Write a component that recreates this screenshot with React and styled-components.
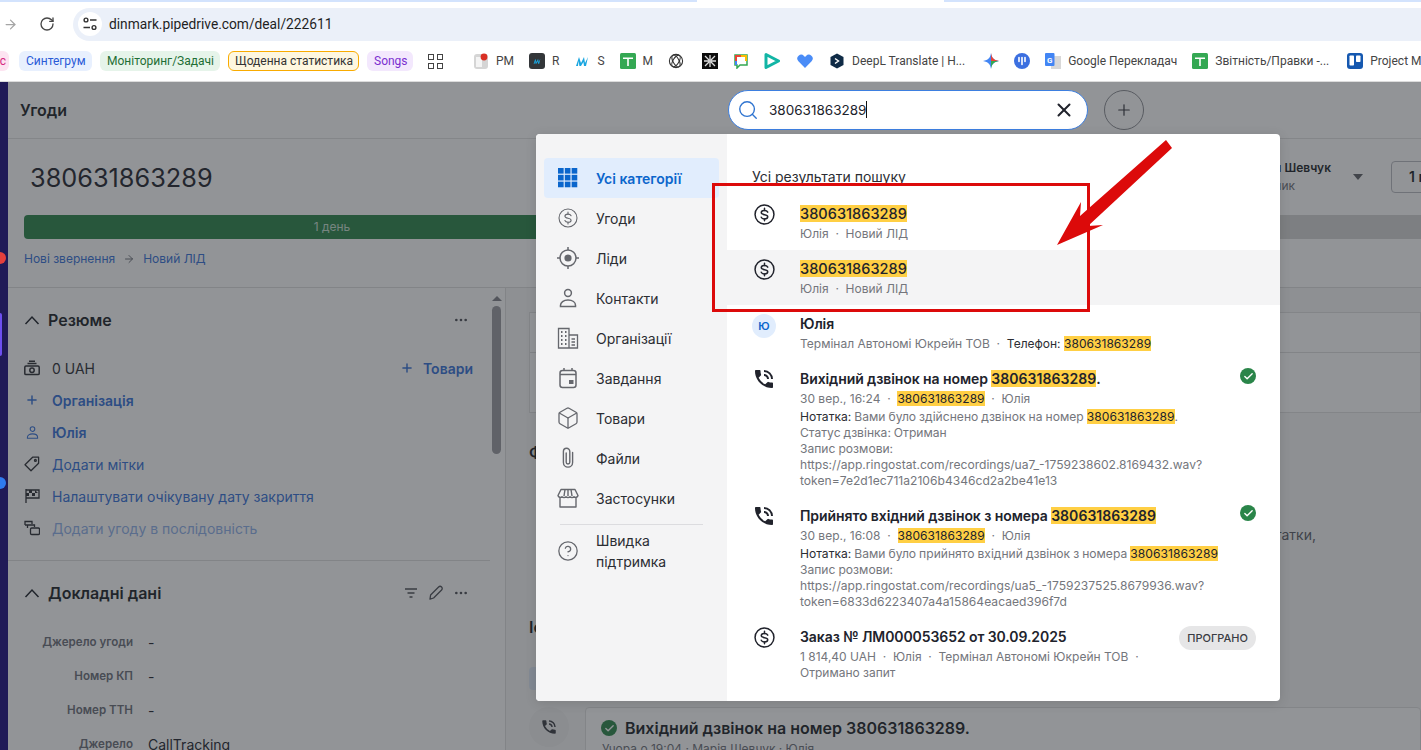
import styled, { createGlobalStyle } from "styled-components";
import {
  ArrowRight,
  RotateCw,
  Search,
  X,
  Plus,
  Ellipsis,
  CircleHelp,
  Box,
  Check,
} from "lucide-react";
import { MdPhoneInTalk } from "react-icons/md";

const GlobalStyle = createGlobalStyle`
  html, body {
    margin: 0;
    height: 100%;
    overflow: hidden;
    background: #fff;
    font-family: "Inter", "Noto Sans", sans-serif;
    color: #1b1f27;
  }
  * { box-sizing: border-box; }
`;

const PHONE = "380631863289";

const Page = styled.div`
  width: 1421px;
  height: 750px;
  overflow: hidden;
  display: flex;
  flex-direction: column;
`;

/* browser chrome */
const Chrome = styled.div`
  height: 82px;
  flex: none;
  background: #fff;
  border-bottom: 1px solid #dcdcdc;
  font-family: "Roboto", "Noto Sans", sans-serif;
`;

const TabStrip = styled.div`
  height: 7px;
  display: flex;
  justify-content: space-between;
  align-items: flex-start;
`;

const TabLine = styled.div`
  height: 2px;
  width: ${(p) => p.$w}px;
  background: #d3e3fd;
`;

const Toolbar = styled.div`
  height: 34px;
  display: flex;
  align-items: center;
  padding-left: 3px;
  color: #474747;
`;

const ReloadWrap = styled.div`
  display: flex;
  margin: 0 18px 0 21px;
`;

const AddressBar = styled.div`
  flex: 1;
  height: 33px;
  border-radius: 17px 0 0 17px;
  background: #ebf0f9;
  display: flex;
  align-items: center;
  padding-left: 5px;
  gap: 7px;
  font-size: 13.75px;
  color: #1f1f1f;
`;

const TuneCircle = styled.div`
  width: 24px;
  height: 24px;
  border-radius: 50%;
  background: #fff;
  display: flex;
  align-items: center;
  justify-content: center;
`;

const Bookmarks = styled.div`
  height: 40px;
  display: flex;
  align-items: center;
  gap: 8px;
  white-space: nowrap;
  font-size: 12px;
  color: #444;
`;

const Chip = styled.div`
  flex: none;
  height: 20px;
  line-height: 18px;
  padding: 0 6px;
  border-radius: 6px;
  text-align: center;
  width: ${(p) => p.$w}px;
  margin-left: ${(p) => p.$ml || 0}px;
  background: ${(p) => p.$bg};
  color: ${(p) => p.$fg};
  border: 1px solid ${(p) => p.$line || "transparent"};
`;

const Apps = styled.div`
  margin-left: 7px;
  width: 15px;
  height: 15px;
  display: grid;
  grid-template-columns: 6px 6px;
  gap: 3px;
`;

const AppsCell = styled.span`
  border: 1.5px solid #444;
`;

const BarSep = styled.div`
  width: 2px;
  height: 20px;
  background: #d3e3fd;
  margin: 0 1px 0 7px;
`;

const Link = styled.div`
  flex: none;
  display: flex;
  align-items: center;
  gap: 7px;
  margin-left: 6px;
  margin-right: ${(p) => p.$mr || 1}px;
`;

/* pipedrive app, dimmed by the scrim */
const AppArea = styled.div`
  position: relative;
  flex: 1;
  display: flex;
  overflow: hidden;
  background: #fff;
`;

const Scrim = styled.div`
  position: absolute;
  inset: 0;
  z-index: 1;
  background: rgba(38, 41, 47, 0.5);
`;

const Rail = styled.div`
  position: relative;
  z-index: 2;
  width: 8px;
  flex: none;
  background: #201a57;
`;

const RailDot = styled.span`
  position: absolute;
  left: -6px;
  top: ${(p) => p.$top}px;
  width: 12px;
  height: 12px;
  border-radius: 50%;
  background: ${(p) => p.$c};
`;

const RailMark = styled.span`
  position: absolute;
  left: 0;
  top: 231px;
  width: 2px;
  height: 43px;
  background: #6d4ff0;
  border-radius: 0 2px 2px 0;
`;

const Main = styled.div`
  flex: 1;
  min-width: 0;
  display: flex;
  flex-direction: column;
`;

const Header = styled.div`
  height: 57px;
  flex: none;
  display: flex;
  align-items: center;
  border-bottom: 1px solid #e3e3e3;
`;

const HeaderTitle = styled.div`
  width: 720px;
  padding-left: 12px;
  font-size: 16px;
  font-weight: 600;
`;

const SearchBox = styled.div`
  position: relative;
  z-index: 2;
  width: 360px;
  height: 40px;
  margin-top: -1px;
  border: 1px solid #3d7fe0;
  border-radius: 20px;
  background: #fff;
  display: flex;
  align-items: center;
  padding: 0 12px 0 8px;
  color: #21232c;
`;

const SearchText = styled.div`
  flex: 1;
  margin-left: 10px;
  font-size: 13.5px;
`;

const Caret = styled.span`
  display: inline-block;
  width: 1px;
  height: 17px;
  vertical-align: -3px;
  background: #111;
`;

const AddButton = styled.div`
  width: 40px;
  height: 40px;
  margin-left: 16px;
  border-radius: 50%;
  border: 1px solid #8a8c92;
  display: flex;
  align-items: center;
  justify-content: center;
  color: #33353c;
`;

const DealHead = styled.div`
  height: 149px;
  flex: none;
  padding-left: 16px;
  border-bottom: 1px solid #dedede;
`;

const DealTop = styled.div`
  width: 1500px;
  height: 76px;
  display: flex;
  align-items: center;
`;

const DealTitle = styled.h1`
  flex: 1;
  margin: 0;
  padding-left: 6px;
  font-size: 25.3px;
  font-weight: 400;
  color: #21232c;
`;

const Owner = styled.div`
  width: 90px;
  margin-right: 17px;
`;

const OwnerName = styled.div`
  font-size: 12px;
  font-weight: 600;
  line-height: 18px;
  white-space: nowrap;
`;

const OwnerRole = styled.div`
  font-size: 12px;
  line-height: 18px;
  color: #6d7079;
`;

const CaretDown = styled.span`
  width: 0;
  height: 0;
  border-left: 5px solid transparent;
  border-right: 5px solid transparent;
  border-top: 6px solid #5e6066;
  margin-right: 28px;
`;

const GhostButton = styled.div`
  width: 133px;
  height: 32px;
  padding-left: 17px;
  line-height: 30px;
  border: 1px solid #b9bac0;
  border-radius: 4px;
  font-size: 14px;
  font-weight: 600;
  white-space: nowrap;
`;

const Pipeline = styled.div`
  display: flex;
  gap: 1px;
  height: 24px;
`;

const Stage = styled.div`
  flex: ${(p) => (p.$w ? `0 0 ${p.$w}px` : 1)};
  border-radius: ${(p) => (p.$w ? "4px 0 0 4px" : "0")};
  background: ${(p) => (p.$w ? "#2a8549" : "#d4d4d5")};
  color: rgba(255, 255, 255, 0.75);
  text-align: center;
  font-size: 12px;
  line-height: 24px;
`;

const Breadcrumb = styled.div`
  display: flex;
  align-items: center;
  gap: 8px;
  margin-top: 12px;
  font-size: 12px;
  line-height: 16px;
  color: #3571d8;
`;

const Content = styled.div`
  flex: 1;
  min-height: 0;
  display: flex;
`;

const Aside = styled.div`
  position: relative;
  width: 498px;
  flex: none;
  border-right: 1px solid #dedede;
  overflow: hidden;
`;

const ScrollUp = styled.span`
  position: absolute;
  left: 484px;
  top: 8px;
  width: 0;
  height: 0;
  border-left: 5px solid transparent;
  border-right: 5px solid transparent;
  border-bottom: 5px solid #808188;
`;

const ScrollThumb = styled.span`
  position: absolute;
  left: 484px;
  top: 18px;
  width: 9px;
  height: 148px;
  border-radius: 5px;
  background: #9a9ba1;
`;

const Section = styled.div`
  width: 482px;
  padding: 20px 17px 16px 16px;
  border-bottom: ${(p) => (p.$last ? "none" : "1px solid #dedede")};
`;

const SectionHead = styled.div`
  display: flex;
  align-items: center;
  height: 24px;
  gap: 8px;
  margin-bottom: 20px;
`;

const SectionTitle = styled.div`
  flex: 1;
  font-size: 16px;
  font-weight: 600;
`;

const SectionTools = styled.div`
  display: flex;
  gap: 9px;
  padding-right: 4px;
  color: #4d4f56;
`;

const SummaryRow = styled.div`
  height: 32px;
  display: flex;
  align-items: center;
  gap: 12px;
  font-size: 14px;
  font-weight: ${(p) => (p.$strong ? 600 : 400)};
  color: ${(p) => p.$c || "#3571d8"};
`;

const SummaryIcon = styled.span`
  width: 16px;
  display: flex;
  justify-content: center;
  color: ${(p) => (p.$link ? "#3571d8" : "#2b2d33")};
`;

const PlusLink = styled.span`
  margin-left: auto;
  display: flex;
  align-items: center;
  gap: 9px;
  font-weight: 600;
  color: #3571d8;
`;

const FieldRow = styled.div`
  height: 34px;
  display: flex;
  align-items: center;
  gap: 15px;
`;

const FieldLabel = styled.div`
  width: 109px;
  text-align: right;
  font-size: 11.6px;
  font-weight: 600;
  color: #6b6e78;
`;

const FieldValue = styled.div`
  font-size: 14px;
  color: #21232c;
`;

const Feed = styled.div`
  flex: 1;
  min-width: 0;
  padding: 24px 0 0 23px;
  background: #f7f7f7;
`;

const FeedCard = styled.div`
  height: 101px;
  background: #fff;
  border: 1px solid #e0e0e0;
  padding-top: 39px;
`;

const FeedCardLine = styled.div`
  height: 1px;
  background: #dedede;
`;

const FeedHeading = styled.div`
  margin-top: ${(p) => p.$mt}px;
  font-size: 16px;
  line-height: 24px;
  font-weight: 600;
`;

const FeedNote = styled.div`
  margin-top: 61px;
  padding-right: 105px;
  text-align: right;
  font-size: 14px;
  line-height: 20px;
  color: #5a5d66;
`;

const FeedPill = styled.div`
  width: 60px;
  height: 23px;
  margin-top: 28px;
  border-radius: 4px;
  background: #dfe9f7;
`;

const Timeline = styled.div`
  display: flex;
  gap: 16px;
  margin-top: 17px;
`;

const TimelineBadge = styled.div`
  width: 40px;
  height: 40px;
  flex: none;
  border-radius: 50%;
  background: #f0f0f0;
  display: flex;
  align-items: center;
  justify-content: center;
  color: #3a3c43;
`;

const TimelineCard = styled.div`
  flex: 1;
  height: 80px;
  padding: 9px 15px;
  background: #fff;
  border: 1px solid #e0e0e0;
  border-radius: 4px;
`;

const TimelineTitle = styled.div`
  display: flex;
  align-items: center;
  gap: 8px;
  font-size: 16px;
  line-height: 22px;
  font-weight: 600;
`;

const TimelineSub = styled.div`
  margin-top: 2px;
  padding-left: 1px;
  font-size: 12px;
  color: #6d7079;
`;

/* search dropdown */
const Dropdown = styled.div`
  position: absolute;
  z-index: 3;
  left: 536px;
  top: 52px;
  width: 744px;
  height: 567px;
  display: flex;
  background: #fff;
  border-radius: 4px;
  overflow: hidden;
  box-shadow: 0 2px 12px rgba(0, 0, 0, 0.12);
`;

const Categories = styled.div`
  width: 191px;
  flex: none;
  padding: 24px 8px;
  background: #f4f4f5;
`;

const Category = styled.div`
  min-height: 40px;
  display: flex;
  align-items: center;
  gap: 16px;
  padding-left: 12px;
  border-radius: 4px;
  font-size: 14px;
  font-weight: ${(p) => (p.$active ? 600 : 400)};
  color: ${(p) => (p.$active ? "#0b66cc" : "#2b2d33")};
  background: ${(p) => (p.$active ? "#e1edfd" : "transparent")};
`;

const CategoryIcon = styled.span`
  width: 24px;
  height: 24px;
  flex: none;
  display: flex;
  align-items: center;
  justify-content: center;
  color: ${(p) => (p.$active ? "#0b66cc" : "#65676d")};
`;

const HelpLabel = styled.div`
  line-height: 21px;
`;

const CategoryRule = styled.div`
  height: 1px;
  margin: 6px 16px 5px 16px;
  background: #dcdcdf;
`;

const Results = styled.div`
  flex: 1;
  min-width: 0;
  padding-top: 35px;
`;

const ResultsTitle = styled.div`
  padding-left: 25px;
  margin-bottom: 10px;
  font-size: 14px;
  line-height: 16px;
  color: #2b2d33;
`;

const Result = styled.div`
  display: flex;
  gap: 24px;
  padding: 10px 24px 8px 25px;
  background: ${(p) => (p.$hover ? "#f4f4f5" : "transparent")};
`;

const ResultIcon = styled.span`
  width: 24px;
  height: 20px;
  margin-top: -1px;
  flex: none;
  display: flex;
  align-items: center;
  justify-content: center;
  color: #21232c;
`;

const Avatar = styled.span`
  width: 24px;
  height: 24px;
  margin-top: 4px;
  border-radius: 50%;
  background: #e1edfd;
  color: #0b66cc;
  font-size: 11px;
  font-weight: 600;
  display: flex;
  align-items: center;
  justify-content: center;
`;

const ResultBody = styled.div`
  flex: 1;
  min-width: 0;
`;

const ResultTitle = styled.div`
  font-size: ${(p) => p.$size || 14}px;
  line-height: 20px;
  font-weight: ${(p) => p.$weight || 600};
  margin: -1px 0 2px;
  letter-spacing: -0.08px;
  color: #21232c;
`;

const Meta = styled.div`
  font-size: 12px;
  line-height: 16px;
  color: #74767c;
`;

const Strong = styled.span`
  color: #2b2d33;
`;

const Mark = styled.mark`
  background: #ffcf44;
  color: #21232c;
  letter-spacing: 0.05px;
`;

const NoteBlock = styled.div`
  margin-top: 2px;
  font-size: 12.1px;
  line-height: 16px;
  word-spacing: -0.4px;
  color: #74767c;
`;

const StatusDot = styled.span`
  width: 16px;
  height: 16px;
  flex: none;
  margin: ${(p) => p.$mt || 0}px 0 0 -24px;
  border-radius: 50%;
  background: #2a8549;
  color: #fff;
  display: flex;
  align-items: center;
  justify-content: center;
`;

const TitleDot = styled(StatusDot)`
  margin: 0;
`;

const Badge = styled.span`
  flex: none;
  height: 24px;
  padding: 0 8px;
  margin-top: -2px;
  border-radius: 12px;
  background: #e6e6e7;
  font-size: 11px;
  font-weight: 500;
  line-height: 24px;
  color: #3a3c43;
`;

/* annotation drawn over the screenshot */
const RedFrame = styled.div`
  position: absolute;
  z-index: 4;
  left: 712px;
  top: 101px;
  width: 378px;
  height: 129px;
  border: 3px solid #dc0a0a;
  pointer-events: none;
`;

const RedArrow = styled.svg`
  position: absolute;
  z-index: 4;
  left: 1050px;
  top: 55px;
  pointer-events: none;
`;

const DollarIcon = ({ size = 21, width = 1.7 }) => (
  <svg width={size} height={size} viewBox="0 0 24 24" fill="none" stroke="currentColor" strokeWidth={width} strokeLinecap="round">
    <circle cx="12" cy="12" r="10.8" />
    <path d="M15.7 9.3c-.6-1.3-2-2-3.7-2-2.1 0-3.7 1-3.7 2.5 0 3.4 7.4 1.5 7.4 4.8 0 1.500-1.600 2.500-3.700 2.500-1.700 0-3.100-.7-3.700-2" />
    <path d="M12 4.8v2.5M12 17.100v2.100" />
  </svg>
);

const ChevronIcon = () => (
  <svg width="16" height="14" viewBox="0 0 16 14" fill="none" stroke="currentColor" strokeWidth="1.5">
    <path d="M1.5 11 8 4l6.5 7" />
  </svg>
);

const GridIcon = () => (
  <svg width="20" height="20" viewBox="0 0 22 22" fill="currentColor">
    {[0, 7.5, 15].map((y) =>
      [0, 7.5, 15].map((x) => <rect key={`${x}-${y}`} x={x} y={y} width="6.2" height="6.2" />)
    )}
  </svg>
);

const LeadIcon = () => (
  <svg width="24" height="24" viewBox="0 0 24 24" fill="none" stroke="currentColor" strokeWidth="1.5">
    <circle cx="12" cy="12" r="8" />
    <circle cx="12" cy="12" r="3.6" fill="currentColor" stroke="none" />
    <path d="M12 1v3M12 20v3M1 12h3M20 12h3" />
  </svg>
);

const PersonIcon = ({ size = 22 }) => (
  <svg width={size} height={size} viewBox="0 0 22 22" fill="none" stroke="currentColor" strokeWidth="1.5">
    <circle cx="11" cy="6" r="3.4" />
    <path d="M3.5 19.5v-1.2c0-3 3-5.3 7.5-5.3s7.5 2.3 7.5 5.3v1.2z" />
  </svg>
);

const OrgIcon = () => (
  <svg width="22" height="22" viewBox="0 0 22 22" fill="none" stroke="currentColor" strokeWidth="1.3">
    <path d="M1.5 21V1.5h10.5V21zM12 8h8.5v13H12" />
    <path d="M4 5h1.5M8 5h1.5M4 9h1.5M8 9h1.5M4 13h1.5M8 13h1.5M4 17h1.5M8 17h1.5" strokeWidth="2" />
    <path d="M14.5 12h3.5M14.5 15h3.5M14.5 18h3.5" />
  </svg>
);

const TaskIcon = () => (
  <svg width="22" height="22" viewBox="0 0 22 22" fill="none" stroke="currentColor" strokeWidth="1.5">
    <rect x="3" y="3.5" width="16" height="17" rx="2.5" />
    <path d="M3 7.5h16M7 1v3M15 1v3" />
    <rect x="12" y="13" width="4.5" height="4" fill="currentColor" stroke="none" />
  </svg>
);

const ClipIcon = () => (
  <svg width="24" height="24" viewBox="0 0 24 24" fill="none" stroke="currentColor" strokeWidth="1.4" strokeLinecap="round">
    <path d="M10.2 7v9.2a1.8 1.8 0 0 0 3.6 0V5.5a3.2 3.2 0 0 0-6.4 0v11a4.600 4.600 0 0 0 9.200 0V6.500" />
  </svg>
);

const StoreIcon = () => (
  <svg width="22" height="22" viewBox="0 0 22 22" fill="none" stroke="currentColor" strokeWidth="1.4" strokeLinejoin="round">
    <path d="M4 2.5h14l3 6a2.4 2.4 0 0 1-4 1.2 2.8 2.8 0 0 1-4 0 2.8 2.8 0 0 1-4 0 2.8 2.8 0 0 1-4 0 2.4 2.4 0 0 1-4-1.2z" />
    <path d="M8 2.5 7 9M11 2.5V9M14 2.5 15 9" />
    <path d="M3 10.5V20h16v-9.5" />
  </svg>
);

const MoneyIcon = () => (
  <svg width="16" height="16" viewBox="0 0 16 16" fill="none" stroke="currentColor" strokeWidth="1.5">
    <path d="M5 1.2h6M3.5 3.6h9" />
    <rect x="0.8" y="6" width="14.4" height="8.6" rx="1.2" />
    <circle cx="8" cy="10.3" r="2.2" />
  </svg>
);

const TagIcon = () => (
  <svg width="16" height="16" viewBox="0 0 16 16" fill="none" stroke="currentColor" strokeWidth="1.3" strokeLinejoin="round">
    <path d="M1 8.8 8.6 1.2h6v6L7 14.8z" />
    <circle cx="11.4" cy="4.4" r="0.9" />
  </svg>
);

const FlagIcon = () => (
  <svg width="16" height="16" viewBox="0 0 16 16" fill="none" stroke="currentColor" strokeWidth="1.3">
    <path d="M2 1v14M2 2h13v8H2" />
    <path d="M5 2v3h3V2M11 2v3h3M2 5h3v3H2M8 5h3v3H8" fill="currentColor" stroke="none" />
  </svg>
);

const SequenceIcon = () => (
  <svg width="16" height="16" viewBox="0 0 16 16" fill="none" stroke="currentColor" strokeWidth="1.3">
    <path d="M1 5V1.5h7V4M1 5h3M3.5 8V5h7v2" />
    <rect x="6.5" y="8" width="9" height="6.5" rx="1.2" />
  </svg>
);

const FilterIcon = () => (
  <svg width="16" height="16" viewBox="0 0 16 16" stroke="currentColor" strokeWidth="1.5">
    <path d="M2 4h12M4.5 8h7M6.5 12h3" />
  </svg>
);

const PencilIcon = () => (
  <svg width="16" height="16" viewBox="0 0 16 16" fill="none" stroke="currentColor" strokeWidth="1.3" strokeLinejoin="round">
    <path d="M2 14.2 2.6 10 10.6 2a2 2 0 0 1 3 3l-8 8z" />
  </svg>
);

const TuneIcon = () => (
  <svg width="16" height="16" viewBox="0 0 16 16" fill="none" stroke="#333" strokeWidth="1.4">
    <circle cx="4" cy="4" r="1.9" />
    <path d="M8 4h6.5M1.5 11.5H8" />
    <circle cx="12" cy="11.5" r="1.9" />
  </svg>
);

const LogoBox = ({ children }) => (
  <svg width="16" height="16" viewBox="0 0 16 16">
    {children}
  </svg>
);

const MLogo = ({ c = "#1aa6e0" }) => (
  <path d="M2 13 5 4l2 6 3-6 1 6 3-6-2 9H10l-.6-4-2.4 4H5.4L4.6 8 4 13z" fill={c} />
);

const categories = [
  { label: "Усі категорії", icon: <GridIcon />, active: true },
  { label: "Угоди", icon: <DollarIcon size={20} width={1.3} /> },
  { label: "Ліди", icon: <LeadIcon /> },
  { label: "Контакти", icon: <PersonIcon /> },
  { label: "Організації", icon: <OrgIcon /> },
  { label: "Завдання", icon: <TaskIcon /> },
  { label: "Товари", icon: <Box size={24} strokeWidth={1.3} /> },
  { label: "Файли", icon: <ClipIcon /> },
  { label: "Застосунки", icon: <StoreIcon /> },
];

const fields = [
  ["Джерело угоди", "-"],
  ["Номер КП", "-"],
  ["Номер ТТН", "-"],
  ["Джерело", "CallTracking"],
];

const calls = [
  {
    title: (
      <>
        Вихідний дзвінок на номер <Mark>{PHONE}</Mark>.
      </>
    ),
    time: "30 вер., 16:24",
    note: (
      <>
        <Strong>Нотатка:</Strong> Вами було здійснено дзвінок на номер <Mark>{PHONE}</Mark>.
        <br />
        Статус дзвінка: Отриман
        <br />
        Запис розмови:
        <br />
        https://app.ringostat.com/recordings/ua7_-1759238602.8169432.wav?
        <br />
        token=7e2d1ec711a2106b4346cd2a2be41e13
      </>
    ),
  },
  {
    title: (
      <>
        Прийнято вхідний дзвінок з номера <Mark>{PHONE}</Mark>
      </>
    ),
    time: "30 вер., 16:08",
    note: (
      <>
        <Strong>Нотатка:</Strong> Вами було прийнято вхідний дзвінок з номера <Mark>{PHONE}</Mark>
        <br />
        Запис розмови:
        <br />
        https://app.ringostat.com/recordings/ua5_-1759237525.8679936.wav?
        <br />
        token=6833d6223407a4a15864eacaed396f7d
      </>
    ),
  },
];

const DealResult = ({ hover }) => (
  <Result $hover={hover}>
    <ResultIcon>
      <DollarIcon />
    </ResultIcon>
    <ResultBody>
      <ResultTitle $size={14.5} $weight={500}>
        <Mark>{PHONE}</Mark>
      </ResultTitle>
      <Meta>Юлія &nbsp;·&nbsp; Новий ЛІД</Meta>
    </ResultBody>
  </Result>
);

const App = () => {
  return (
    <Page>
      <GlobalStyle />
      <Chrome>
        <TabStrip>
          <TabLine $w={697} />
          <TabLine $w={477} />
        </TabStrip>
        <Toolbar>
          <ArrowRight size={15} color="#a5a5a5" />
          <ReloadWrap>
            <RotateCw size={16} strokeWidth={2} />
          </ReloadWrap>
          <AddressBar>
            <TuneCircle>
              <TuneIcon />
            </TuneCircle>
            dinmark.pipedrive.com/deal/222611
          </AddressBar>
        </Toolbar>
        <Bookmarks>
          <Chip $ml={-38} $w={47} $bg="#fde4f1" $fg="#d6277f">
            Сервіс
          </Chip>
          <Chip $ml={2} $w={73} $bg="#e8f0fe" $fg="#2a5bd7">
            Синтегрум
          </Chip>
          <Chip $w={120} $bg="#e6f4ea" $fg="#1e6e34">
            Моніторинг/Задачі
          </Chip>
          <Chip $w={131} $bg="#fef7e0" $fg="#333" $line="#f9ab00">
            Щоденна статистика
          </Chip>
          <Chip $w={46} $bg="#f3e8fd" $fg="#7b2fd0">
            Songs
          </Chip>
          <Apps>
            <AppsCell />
            <AppsCell />
            <AppsCell />
            <AppsCell />
          </Apps>
          <BarSep />
          <Link>
            <LogoBox>
              <rect x="1" y="1" width="14" height="15" rx="3" fill="#d5d5d5" />
              <rect x="3" y="4" width="6" height="10" fill="#f4f4f4" />
              <circle cx="11" cy="4" r="3.4" fill="#d93025" />
            </LogoBox>
            PM
          </Link>
          <Link>
            <LogoBox>
              <rect width="16" height="16" rx="3" fill="#333639" />
              <g transform="translate(3.5 3.5) scale(.56)">
                <MLogo />
              </g>
            </LogoBox>
            R
          </Link>
          <Link>
            <LogoBox>
              <MLogo />
            </LogoBox>
            S
          </Link>
          <Link>
            <LogoBox>
              <rect width="16" height="16" rx="1.5" fill="#34a853" />
              <path d="M3 4.5h10v1.6H8.8V13H7.2V6.1H3z" fill="#fff" />
            </LogoBox>
            M
          </Link>
          <Link $mr={4}>
            <LogoBox>
              <g fill="none" stroke="#333" strokeWidth="1.1">
                <circle cx="8" cy="8" r="6.6" />
                <ellipse cx="8" cy="8" rx="6.5" ry="3" transform="rotate(60 8 8)" />
                <ellipse cx="8" cy="8" rx="6.5" ry="3" transform="rotate(-60 8 8)" />
              </g>
            </LogoBox>
          </Link>
          <Link>
            <LogoBox>
              <rect width="16" height="16" fill="#0c0c0c" />
              <path d="M3 3l4 4M13 3 9 7M3 13l4-4M13 13 9 9M8 2v12M2 8h12" stroke="#ddd" strokeWidth="1.3" />
            </LogoBox>
          </Link>
          <Link>
            <LogoBox>
              <path d="M2 2h12v10H7l-3 3v-3H2z" fill="#fff" stroke="#34a853" strokeWidth="1.5" />
              <path d="M2 2h6v2H4v4H2z" fill="#ea4335" />
              <path d="M8 2h6v6h-2V4H8z" fill="#fbbc04" />
              <path d="M2 8h2v4H2z" fill="#4285f4" />
            </LogoBox>
          </Link>
          <Link $mr={3}>
            <LogoBox>
              <path d="M2 1.5 14.5 8 2 14.5z" fill="none" stroke="#12b5a5" strokeWidth="3" strokeLinejoin="round" />
            </LogoBox>
          </Link>
          <Link $mr={2}>
            <LogoBox>
              <path d="M8 15 1.4 8.2A3.8 3.8 0 0 1 7 3l1 1 1-1a3.8 3.8 0 0 1 5.6 5.2z" fill="#4a8cf7" />
            </LogoBox>
          </Link>
          <Link $mr={4}>
            <LogoBox>
              <path d="M8 0.5 14.5 4v8L8 15.5 1.5 12V4z" fill="#0f2b46" />
              <path d="M6 5.5 9.5 8 6 10.5" stroke="#fff" strokeWidth="1.4" fill="none" />
            </LogoBox>
            DeepL Translate | Н...
          </Link>
          <Link>
            <LogoBox>
              <path d="M8 0c.6 4.6 2.4 7 8 8-5.6 1-7.4 3.4-8 8-.6-4.6-2.4-7-8-8 5.6-1 7.4-3.4 8-8z" fill="#4285f4" />
              <path d="M8 0c.6 4.6 2.4 7 8 8H8z" fill="#ea4335" />
              <path d="M8 8h8c-5.6 1-7.4 3.4-8 8z" fill="#34a853" />
            </LogoBox>
          </Link>
          <Link>
            <LogoBox>
              <circle cx="8" cy="8" r="8" fill="#3b6fe0" />
              <path d="M5 4.5v4M8 4.5v7M11 4.5v4" stroke="#fff" strokeWidth="1.6" strokeLinecap="round" />
            </LogoBox>
          </Link>
          <Link>
            <LogoBox>
              <rect x="6" y="3" width="10" height="13" fill="#d8d8d8" />
              <rect width="9.5" height="13" rx="1" fill="#4285f4" />
              <text x="4.7" y="9.5" fontSize="8" fontWeight="700" textAnchor="middle" fill="#fff">
                G
              </text>
            </LogoBox>
            Google Перекладач
          </Link>
          <Link $mr={4}>
            <LogoBox>
              <rect width="16" height="16" rx="1.5" fill="#34a853" />
              <path d="M3 4.5h10v1.6H8.8V13H7.2V6.1H3z" fill="#fff" />
            </LogoBox>
            Звітність/Правки -...
          </Link>
          <Link>
            <LogoBox>
              <rect width="16" height="16" rx="3" fill="#1558b0" />
              <rect x="2.5" y="2.5" width="4.5" height="10" rx="0.8" fill="#fff" />
              <rect x="9" y="2.5" width="4.5" height="6.5" rx="0.8" fill="#fff" />
            </LogoBox>
            Project Management
          </Link>
        </Bookmarks>
      </Chrome>

      <AppArea>
        <Rail>
          <RailDot $top={170} $c="#e5403c" />
          <RailMark />
          <RailDot $top={395} $c="#2f7bf0" />
        </Rail>
        <Main>
          <Header>
            <HeaderTitle>Угоди</HeaderTitle>
            <SearchBox>
              <Search size={22} strokeWidth={1.5} color="#2f74d0" />
              <SearchText>
                {PHONE}
                <Caret />
              </SearchText>
              <X size={22} strokeWidth={2.2} />
            </SearchBox>
            <AddButton>
              <Plus size={18} strokeWidth={1.6} />
            </AddButton>
          </Header>

          <DealHead>
            <DealTop>
              <DealTitle>{PHONE}</DealTitle>
              <Owner>
                <OwnerName>Марія Шевчук</OwnerName>
                <OwnerRole>Власник</OwnerRole>
              </Owner>
              <CaretDown />
              <GhostButton>1 подія</GhostButton>
            </DealTop>
            <Pipeline>
              <Stage $w={616}>1 день</Stage>
              <Stage />
            </Pipeline>
            <Breadcrumb>
              Нові звернення
              <ArrowRight size={12} color="#6d7079" />
              Новий ЛІД
            </Breadcrumb>
          </DealHead>

          <Content>
            <Aside>
              <ScrollUp />
              <ScrollThumb />
              <Section>
                <SectionHead>
                  <ChevronIcon />
                  <SectionTitle>Резюме</SectionTitle>
                  <SectionTools>
                    <Ellipsis size={16} />
                  </SectionTools>
                </SectionHead>
                <SummaryRow $c="#2b2d33">
                  <SummaryIcon>
                    <MoneyIcon />
                  </SummaryIcon>
                  0 UAH
                  <PlusLink>
                    <Plus size={14} strokeWidth={2.5} />
                    Товари
                  </PlusLink>
                </SummaryRow>
                <SummaryRow $strong>
                  <SummaryIcon $link>
                    <Plus size={14} strokeWidth={2.5} />
                  </SummaryIcon>
                  Організація
                </SummaryRow>
                <SummaryRow $strong>
                  <SummaryIcon $link>
                    <PersonIcon size={15} />
                  </SummaryIcon>
                  Юлія
                </SummaryRow>
                <SummaryRow>
                  <SummaryIcon>
                    <TagIcon />
                  </SummaryIcon>
                  Додати мітки
                </SummaryRow>
                <SummaryRow>
                  <SummaryIcon>
                    <FlagIcon />
                  </SummaryIcon>
                  Налаштувати очікувану дату закриття
                </SummaryRow>
                <SummaryRow $c="#8fb0ea">
                  <SummaryIcon>
                    <SequenceIcon />
                  </SummaryIcon>
                  Додати угоду в послідовність
                </SummaryRow>
              </Section>
              <Section $last>
                <SectionHead>
                  <ChevronIcon />
                  <SectionTitle>Докладні дані</SectionTitle>
                  <SectionTools>
                    <FilterIcon />
                    <PencilIcon />
                    <Ellipsis size={16} />
                  </SectionTools>
                </SectionHead>
                {fields.map(([label, value]) => (
                  <FieldRow key={label}>
                    <FieldLabel>{label}</FieldLabel>
                    <FieldValue>{value}</FieldValue>
                  </FieldRow>
                ))}
              </Section>
            </Aside>

            <Feed>
              <FeedCard>
                <FeedCardLine />
              </FeedCard>
              <FeedHeading $mt={27}>Фокус</FeedHeading>
              <FeedNote>Заплановані дії, закріплені нотатки,</FeedNote>
              <FeedHeading $mt={70}>Історія</FeedHeading>
              <FeedPill />
              <Timeline>
                <TimelineBadge>
                  <MdPhoneInTalk size={18} />
                </TimelineBadge>
                <TimelineCard>
                  <TimelineTitle>
                    <TitleDot>
                      <Check size={11} strokeWidth={3} />
                    </TitleDot>
                    Вихідний дзвінок на номер {PHONE}.
                  </TimelineTitle>
                  <TimelineSub>Учора о 19:04 · Марія Шевчук · Юлія</TimelineSub>
                </TimelineCard>
              </Timeline>
            </Feed>
          </Content>
        </Main>
        <Scrim />

        <Dropdown>
          <Categories>
            {categories.map((c) => (
              <Category key={c.label} $active={c.active}>
                <CategoryIcon $active={c.active}>{c.icon}</CategoryIcon>
                {c.label}
              </Category>
            ))}
            <CategoryRule />
            <Category>
              <CategoryIcon>
                <CircleHelp size={22} strokeWidth={1.4} />
              </CategoryIcon>
              <HelpLabel>
                Швидка
                <br />
                підтримка
              </HelpLabel>
            </Category>
          </Categories>

          <Results>
            <ResultsTitle>Усі результати пошуку</ResultsTitle>
            <DealResult />
            <DealResult hover />
            <Result>
              <ResultIcon>
                <Avatar>Ю</Avatar>
              </ResultIcon>
              <ResultBody>
                <ResultTitle>Юлія</ResultTitle>
                <Meta>
                  Термінал Автономі Юкрейн ТОВ &nbsp;·&nbsp; <Strong>Телефон:</Strong> <Mark>{PHONE}</Mark>
                </Meta>
              </ResultBody>
            </Result>
            {calls.map((call) => (
              <Result key={call.time}>
                <ResultIcon>
                  <MdPhoneInTalk size={24} />
                </ResultIcon>
                <ResultBody>
                  <ResultTitle>{call.title}</ResultTitle>
                  <Meta>
                    {call.time} &nbsp;·&nbsp; <Mark>{PHONE}</Mark> &nbsp;·&nbsp; Юлія
                  </Meta>
                  <NoteBlock>{call.note}</NoteBlock>
                </ResultBody>
                <StatusDot $mt={-2}>
                  <Check size={11} strokeWidth={3} />
                </StatusDot>
              </Result>
            ))}
            <Result>
              <ResultIcon>
                <DollarIcon />
              </ResultIcon>
              <ResultBody>
                <ResultTitle>Заказ № ЛМ000053652 от 30.09.2025</ResultTitle>
                <Meta>
                  1 814,40 UAH &nbsp;·&nbsp; Юлія &nbsp;·&nbsp; Термінал Автономі Юкрейн ТОВ &nbsp;·
                  <br />
                  Отримано запит
                </Meta>
              </ResultBody>
              <Badge>ПРОГРАНО</Badge>
            </Result>
          </Results>
        </Dropdown>

        <RedFrame />
        <RedArrow width="130" height="115" viewBox="1050 137 130 115">
          <polygon points="1166,140 1172,148 1088,226 1103,225 1057,245 1081,202 1080,216" fill="#dc0a0a" />
        </RedArrow>
      </AppArea>
    </Page>
  );
};

export default App;
